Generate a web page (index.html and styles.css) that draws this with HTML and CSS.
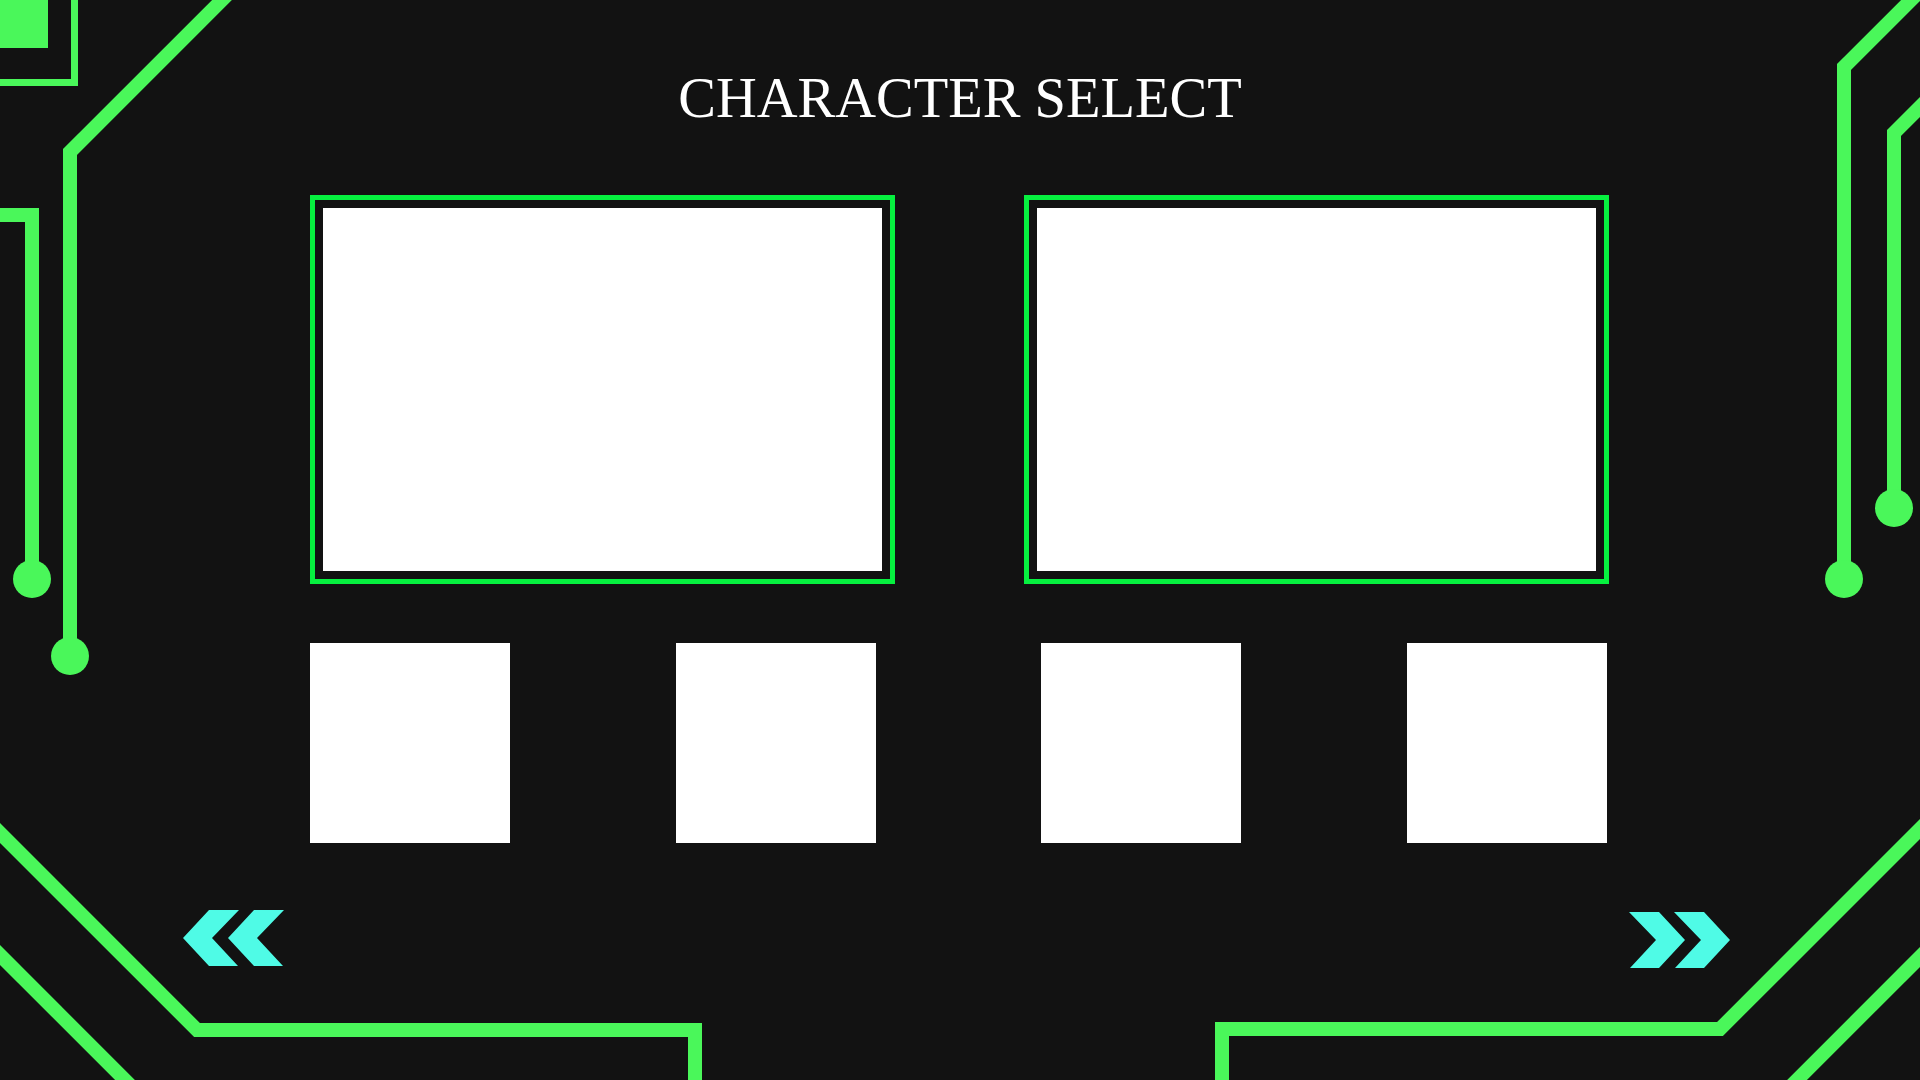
FILE: index.html
```html
<!DOCTYPE html>
<html lang="en">
<head>
<meta charset="utf-8">
<title>Character Select</title>
<link rel="stylesheet" href="styles.css">
</head>
<body>
<div class="screen">
  <svg class="circuit" width="1920" height="1080" viewBox="0 0 1920 1080" aria-hidden="true">
    <g fill="none" stroke="#4af75a" stroke-width="14" stroke-linejoin="miter" stroke-linecap="butt">
      <path d="M70 656 L70 152 L232 -10"/>
      <path d="M-10 215 L32 215 L32 579"/>
      <path d="M1844 579 L1844 67 L1921 -10"/>
      <path d="M1894 508 L1894 133 L1930 97"/>
      <path d="M-10 823 L197 1030 L695 1030 L695 1090"/>
      <path d="M-10 945 L135 1090"/>
      <path d="M1222 1090 L1222 1029 L1720 1029 L1930 819"/>
      <path d="M1930 947 L1787 1090"/>
      <path d="M74.5 -5 L74.5 82.5 L-5 82.5" stroke-width="7"/>
    </g>
    <g fill="#4af75a">
      <rect x="0" y="0" width="48" height="48"/>
      <circle cx="70" cy="656" r="19"/>
      <circle cx="32" cy="579" r="19"/>
      <circle cx="1844" cy="579" r="19"/>
      <circle cx="1894" cy="508" r="19"/>
    </g>
  </svg>

  <h1 class="title">CHARACTER SELECT</h1>

  <div class="stage">
    <div class="panels">
      <div class="panel"><div class="panel-inner"></div></div>
      <div class="panel"><div class="panel-inner"></div></div>
    </div>

    <div class="slots">
      <div class="slot"></div>
      <div class="slot"></div>
      <div class="slot"></div>
      <div class="slot"></div>
    </div>
  </div>

  <div class="nav">
    <button class="nav-btn" aria-label="Previous">
      <svg width="102" height="57" viewBox="0 0 102 57">
        <polygon fill="#4ffbe6" points="26,0 56,0 29,28 55,56 26,56 0,28"/>
        <polygon fill="#4ffbe6" points="71,0 101,0 74,28 100,56 71,56 45,28"/>
      </svg>
    </button>
    <button class="nav-btn nav-next" aria-label="Next">
      <svg width="102" height="57" viewBox="0 0 102 57">
        <polygon fill="#4ffbe6" points="75,0 45,0 72,28 46,56 75,56 101,28"/>
        <polygon fill="#4ffbe6" points="30,0 0,0 27,28 1,56 30,56 56,28"/>
      </svg>
    </button>
  </div>
</div>
</body>
</html>
```

FILE: styles.css
```css
html, body {
  margin: 0;
  padding: 0;
  background: #121212;
}

.screen {
  position: relative;
  width: 1920px;
  height: 1080px;
  overflow: hidden;
  display: flex;
  flex-direction: column;
  background: #121212;
}

.circuit {
  position: absolute;
  left: 0;
  top: 0;
  z-index: 0;
}

.title {
  position: relative;
  z-index: 1;
  margin: 70px 0 0;
  text-align: center;
  font-family: "Liberation Serif", "Times New Roman", serif;
  font-weight: normal;
  font-size: 56.5px;
  line-height: 56px;
  color: #ffffff;
}

.stage {
  position: relative;
  z-index: 1;
  margin-left: 310px;
  width: 1299px;
  display: flex;
  flex-direction: column;
}

.panels {
  display: flex;
  gap: 129px;
  margin-top: 69px;
}

.panel {
  width: 585px;
  height: 389px;
  box-sizing: border-box;
  border: 5px solid #06f03f;
  padding: 8px;
  display: flex;
}

.panel-inner {
  flex: 1;
  background: #ffffff;
}

.slots {
  width: 1297px;
  display: flex;
  justify-content: space-between;
  margin-top: 59px;
}

.slot {
  width: 200px;
  height: 200px;
  background: #ffffff;
}

.nav {
  position: relative;
  z-index: 1;
  display: flex;
  justify-content: space-between;
  align-items: flex-start;
  margin-top: 67px;
  padding: 0 189px 0 183px;
}

.nav-btn {
  display: block;
  padding: 0;
  margin: 0;
  border: 0;
  background: none;
  line-height: 0;
  cursor: pointer;
}

.nav-next {
  margin-top: 2px;
}
```
